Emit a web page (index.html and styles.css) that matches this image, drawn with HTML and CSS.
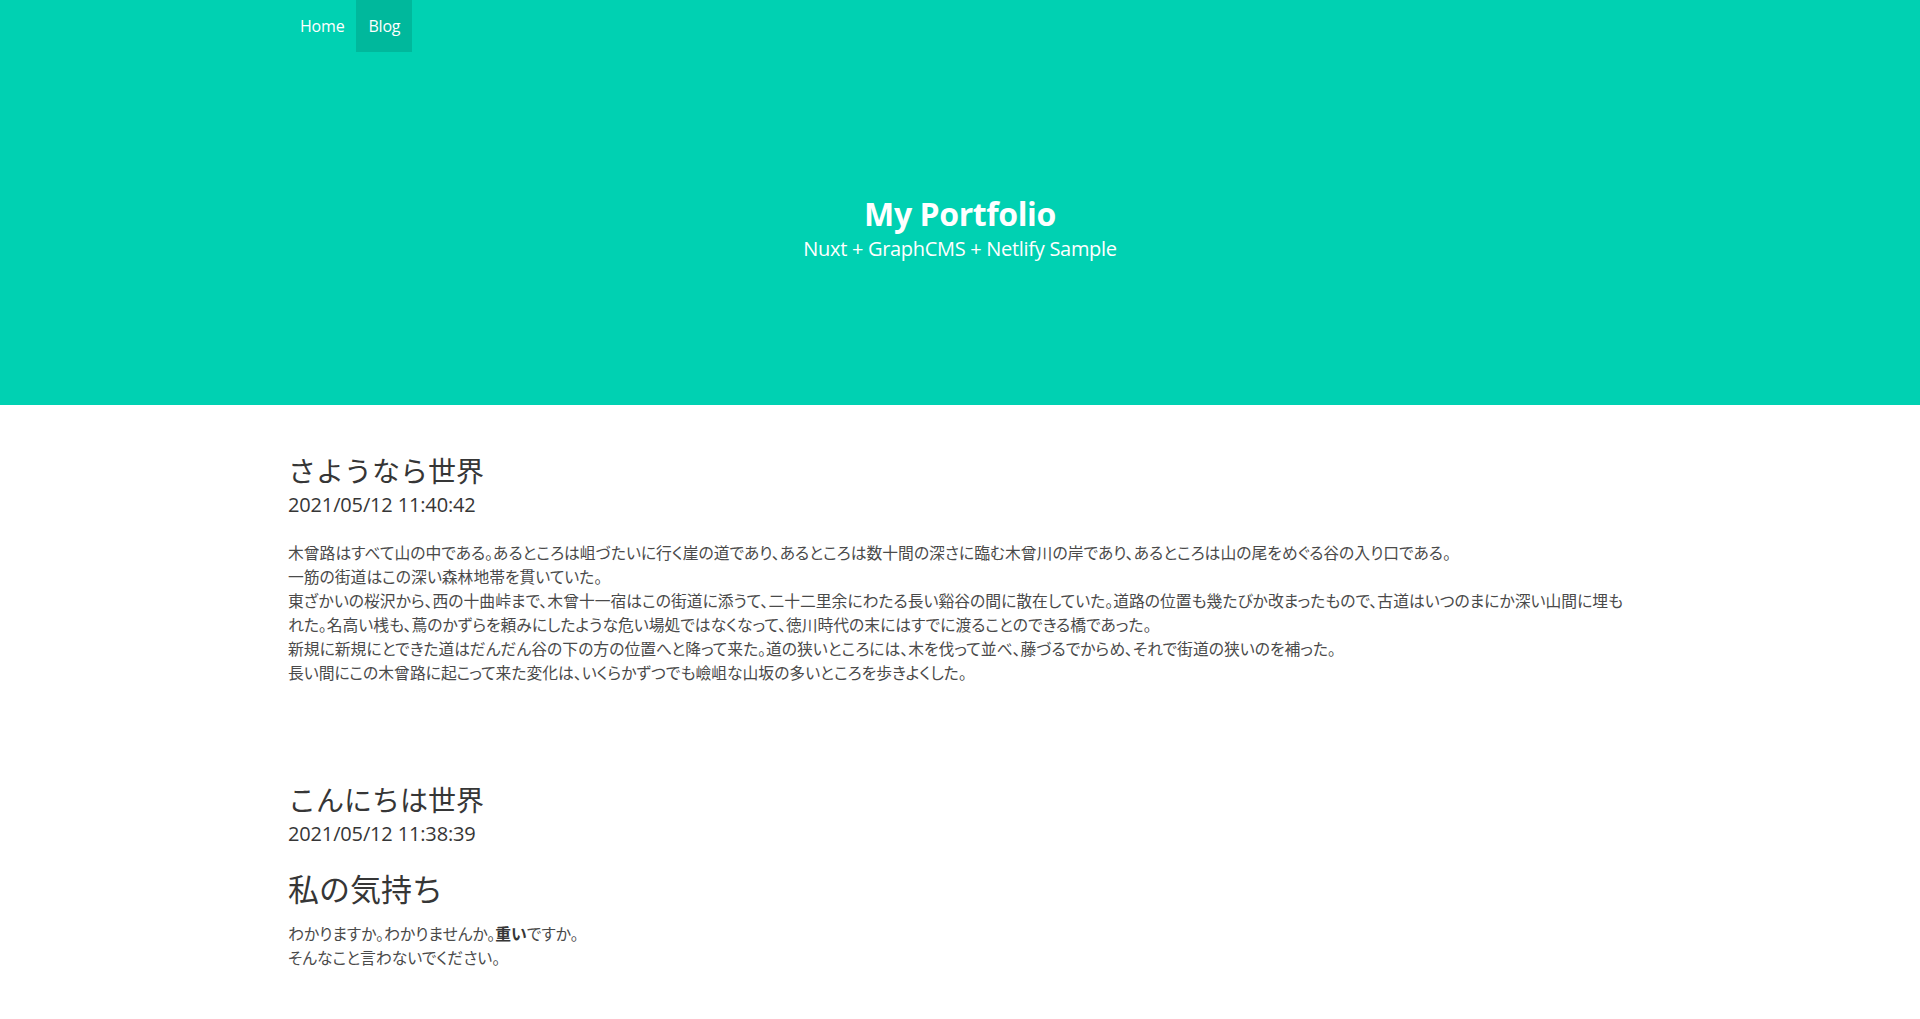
FILE: index.html
```html
<!DOCTYPE html>
<html lang="ja">
<head>
<meta charset="utf-8">
<title>My Portfolio</title>
<link rel="stylesheet" href="styles.css">
</head>
<body>
<section class="hero">
  <nav class="navbar">
    <div class="container nav-inner">
      <a class="nav-item" href="#">Home</a>
      <a class="nav-item active" href="#">Blog</a>
    </div>
  </nav>
  <div class="hero-body">
    <h1 class="title">My Portfolio</h1>
    <h2 class="subtitle">Nuxt + GraphCMS + Netlify Sample</h2>
  </div>
</section>
<main class="container posts">
  <article class="post">
    <h2 class="post-title">さようなら世界</h2>
    <div class="post-date">2021/05/12 11:40:42</div>
    <div class="post-body">
      <p>木曾路はすべて山の中である。あるところは岨づたいに行く崖の道であり、あるところは数十間の深さに臨む木曾川の岸であり、あるところは山の尾をめぐる谷の入り口である。<br>一筋の街道はこの深い森林地帯を貫いていた。<br>東ざかいの桜沢から、西の十曲峠まで、木曾十一宿はこの街道に添うて、二十二里余にわたる長い谿谷の間に散在していた。道路の位置も幾たびか改まったもので、古道はいつのまにか深い山間に埋もれた。名高い桟も、蔦のかずらを頼みにしたような危い場処ではなくなって、徳川時代の末にはすでに渡ることのできる橋であった。<br>新規に新規にとできた道はだんだん谷の下の方の位置へと降って来た。道の狭いところには、木を伐って並べ、藤づるでからめ、それで街道の狭いのを補った。<br>長い間にこの木曾路に起こって来た変化は、いくらかずつでも嶮岨な山坂の多いところを歩きよくした。</p>
    </div>
  </article>
  <article class="post">
    <h2 class="post-title">こんにちは世界</h2>
    <div class="post-date">2021/05/12 11:38:39</div>
    <div class="post-body">
      <h1 class="body-h1">私の気持ち</h1>
      <p>わかりますか。わかりませんか。<strong>重い</strong>ですか。<br>そんなこと言わないでください。</p>
    </div>
  </article>
</main>
</body>
</html>
```

FILE: styles.css
```css
html, body {
  margin: 0;
  padding: 0;
  background: #fff;
}
body {
  font-family: "Open Sans", "Noto Sans CJK JP", sans-serif;
  color: #4a4a4a;
  font-size: 16px;
  line-height: 1.5;
}
.container {
  width: 1344px;
  margin: 0 auto;
}
.hero {
  background: #00d1b2;
  color: #fff;
}
.navbar {
  height: 52px;
}
.nav-inner {
  display: flex;
  height: 100%;
}
.nav-item {
  display: flex;
  align-items: center;
  padding: 0 12px;
  color: #fff;
  text-decoration: none;
  font-size: 16px;
  letter-spacing: -0.2px;
}
.nav-item.active {
  background: #00b89c;
}
.hero-body {
  padding: 144px 0 144px;
  text-align: center;
}
.title {
  margin: 0;
  font-size: 32px;
  font-weight: 700;
  line-height: 36px;
  letter-spacing: -0.4px;
}
.subtitle {
  margin: 4px 0 0;
  font-size: 20px;
  font-weight: 400;
  line-height: 25px;
  letter-spacing: -0.3px;
}
.posts {
  padding: 49px 0 40px;
}
.post {
  margin-bottom: 98px;
}
.post-title {
  margin: 0;
  font-family: "Noto Sans CJK JP", sans-serif;
  font-size: 28px;
  font-weight: 400;
  line-height: 32px;
  color: #363636;
}
.post-date {
  font-size: 20px;
  line-height: 25px;
  color: #363636;
  margin-top: 6px;
  letter-spacing: -0.15px;
}
.post-body {
  margin-top: 24px;
  font-family: "Noto Sans CJK JP", sans-serif;
  font-size: 15.8px;
  line-height: 24px;
  font-feature-settings: "palt";
}
.post-body p {
  margin: 0;
}
.post-body strong {
  color: #363636;
  font-weight: 700;
}
.body-h1 {
  margin: -2px 0 14px;
  font-size: 31px;
  font-weight: 400;
  line-height: 40px;
  color: #363636;
  font-feature-settings: normal;
}
```
